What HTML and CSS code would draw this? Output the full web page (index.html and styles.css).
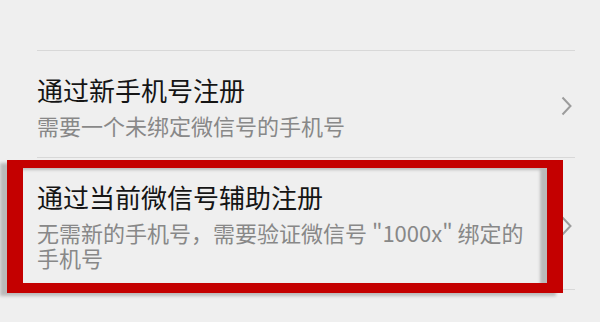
FILE: index.html
```html
<!DOCTYPE html>
<html lang="zh-CN">
<head>
<meta charset="utf-8">
<link rel="stylesheet" href="styles.css">
</head>
<body>
<div class="page">
  <ul class="list">
    <li class="item">
      <div class="text">
        <div class="title">通过新手机号注册</div>
        <div class="sub">需要一个未绑定微信号的手机号</div>
      </div>
      <svg class="chev" width="11" height="20" viewBox="0 0 11 20"><polyline points="1.5,1.5 9.5,10 1.5,18.5" fill="none" stroke="#9c9c9c" stroke-width="2"/></svg>
    </li>
    <li class="item">
      <div class="text">
        <div class="title">通过当前微信号辅助注册</div>
        <div class="sub">无需新的手机号，需要验证微信号 "1000x" 绑定的手机号</div>
      </div>
      <svg class="chev" width="11" height="20" viewBox="0 0 11 20"><polyline points="1.5,1.5 9.5,10 1.5,18.5" fill="none" stroke="#9c9c9c" stroke-width="2"/></svg>
    </li>
  </ul>
  <div class="highlight"></div>
</div>
</body>
</html>
```
FILE: styles.css
```css
html, body {
  margin: 0;
  padding: 0;
  background: #efefef;
}
body {
  width: 600px;
  height: 322px;
  overflow: hidden;
  font-family: "Noto Sans CJK SC", "Noto Sans", sans-serif;
}
.page {
  position: relative;
  padding-top: 50px;
  height: 272px;
}
.list {
  list-style: none;
  margin: 0 25px 0 37px;
  padding: 0;
  border-top: 1px solid #d8d8d8;
}
.item {
  display: flex;
  align-items: center;
  gap: 21px;
  padding: 23px 3px 19px 0;
  border-bottom: 1px solid #d8d8d8;
}
.text {
  flex: 1;
  min-width: 0;
}
.title {
  font-size: 26px;
  line-height: 32px;
  color: #151515;
}
.sub {
  margin-top: 7px;
  font-size: 22px;
  line-height: 25px;
  color: #888888;
}
.chev {
  flex: none;
  display: block;
}
.highlight {
  position: absolute;
  left: 7px;
  top: 160px;
  width: 556px;
  height: 133px;
  box-sizing: border-box;
  border-style: solid;
  border-color: #c40000;
  border-width: 8px 16px 10px 16px;
  box-shadow: -7px 3px 3px rgba(0, 0, 0, 0.22), inset -7px 2px 3px rgba(0, 0, 0, 0.22);
}
```
